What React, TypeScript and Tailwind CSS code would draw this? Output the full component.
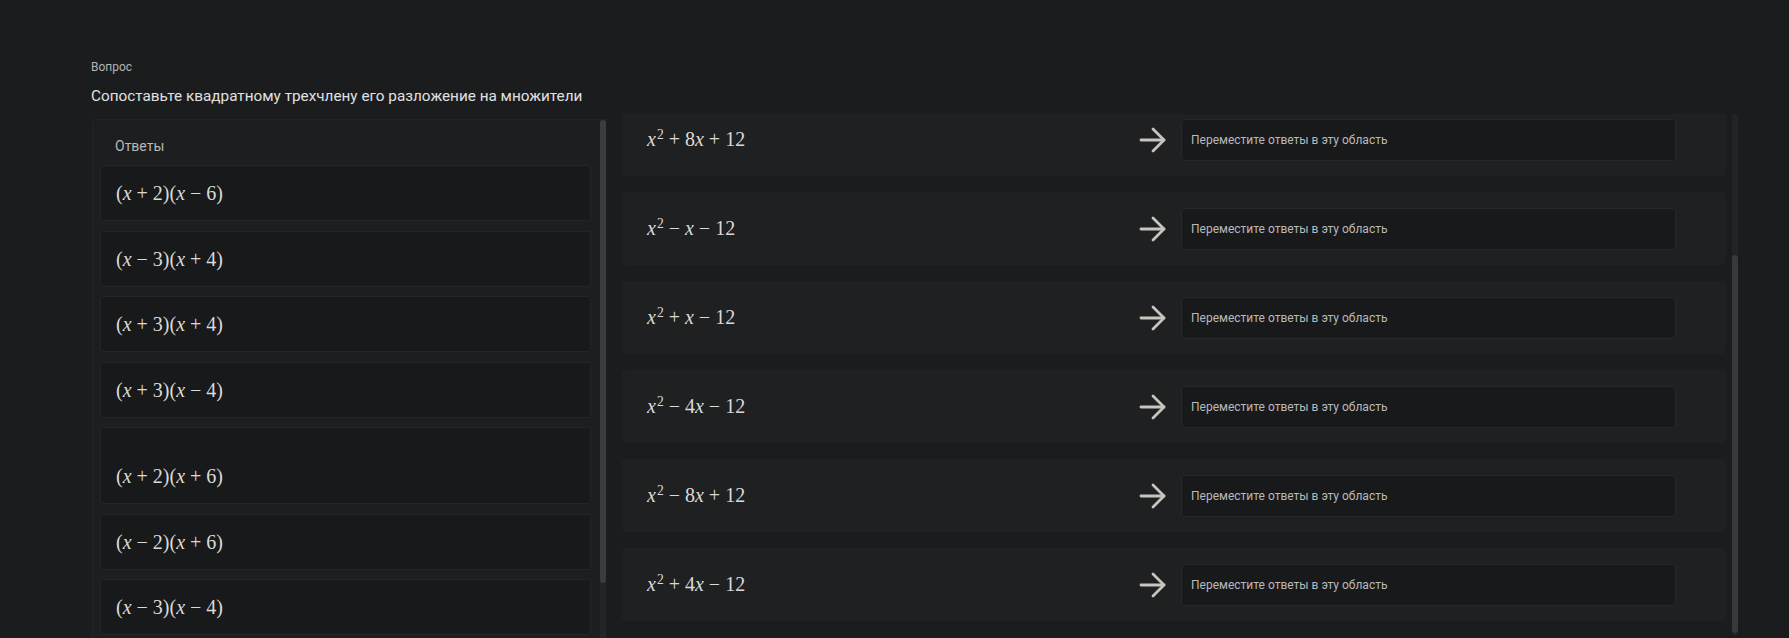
import React from 'react';

const answers = [
  { expr: '(x+2)(x−6)' },
  { expr: '(x−3)(x+4)' },
  { expr: '(x+3)(x+4)' },
  { expr: '(x+3)(x−4)' },
  { expr: '(x+2)(x+6)', tall: true },
  { expr: '(x−2)(x+6)' },
  { expr: '(x−3)(x−4)' },
];

const trinomials = ['x^2+8x+12', 'x^2−x−12', 'x^2+x−12', 'x^2−4x−12', 'x^2−8x+12', 'x^2+4x−12'];

function MathExpr({ expr }: { expr: string }) {
  const parts: React.ReactNode[] = [];
  for (let i = 0; i < expr.length; i++) {
    const c = expr[i];
    if (c === 'x') {
      parts.push(<span key={i} className="italic">x</span>);
    } else if (c === '+' || c === '−') {
      parts.push(<span key={i} className="mx-[5px]">{c}</span>);
    } else if (c === '^') {
      parts.push(<sup key={i} className="text-[0.68em] ml-[1px]">{expr[i + 1]}</sup>);
      i++;
    } else {
      parts.push(<span key={i}>{c}</span>);
    }
  }
  return (
    <span className="font-['Liberation_Serif','DejaVu_Serif',serif] text-[20px] leading-[24px] text-[#dadada] whitespace-nowrap">
      {parts}
    </span>
  );
}

function ArrowIcon() {
  return (
    <svg width="28" height="26" viewBox="0 0 28 26" fill="none" stroke="#c8c4be" strokeWidth="2.8" strokeLinecap="round" strokeLinejoin="round">
      <path d="M2 13h23" />
      <path d="M14 2l11 11-11 11" />
    </svg>
  );
}

export default function App() {
  return (
    <div className="h-[638px] overflow-hidden bg-[#1b1c1e] font-['Roboto',sans-serif]">
      <div className="pl-[91px] pt-[59px]">
        <p className="text-[12px] leading-[16px] text-[#b3b3b3]">Вопрос</p>
        <p className="mt-[11px] text-[15.3px] leading-[20px] text-[#e0e0e0]">
          Сопоставьте квадратному трехчлену его разложение на множители
        </p>

        <div className="mt-[8px] flex items-start">
          {/* Ответы */}
          <div className="ml-[1px] mt-[5px] w-[515px] h-[540px] flex bg-[#1d1e20] border-l border-t border-[#222326] rounded-tl-[3px]">
            <div className="w-[491px] ml-[7px] pt-[16px]">
              <p className="pl-[15px] text-[14px] leading-[20px] text-[#b8b8b8]">Ответы</p>
              <div className="mt-[9px] flex flex-col gap-[9.5px]">
                {answers.map((a) => (
                  <div
                    key={a.expr}
                    className={`flex pl-[15px] border border-[#242528] bg-[#18191b] rounded-[3px] ${
                      a.tall ? 'h-[77px] pt-[36px] items-start' : 'h-[56px] items-center'
                    }`}
                  >
                    <MathExpr expr={a.expr} />
                  </div>
                ))}
              </div>
            </div>
            <div className="ml-[9px] w-[6px] h-full flex flex-col bg-[#242528] rounded-full">
              <div className="h-[463px] bg-[#3b3c3f] rounded-full" />
            </div>
          </div>

          {/* Трехчлены */}
          <div className="ml-[15px] h-[524px] flex">
            <div className="w-[1104px] h-full overflow-hidden">
              <div className="-mt-[11px] flex flex-col gap-[16px]">
                {trinomials.map((t) => (
                  <div key={t} className="h-[73px] flex items-center pl-[25px] pr-[50px] bg-[#1f2022] rounded-[4px]">
                    <div className="flex-1">
                      <MathExpr expr={t} />
                    </div>
                    <div className="mr-[14px] flex items-center">
                      <ArrowIcon />
                    </div>
                    <div className="w-[495px] h-[42px] flex items-center px-[9px] bg-[#18191b] border border-[#27282b] rounded-[4px] text-[12px] text-[#b9b9b9]">
                      Переместите ответы в эту область
                    </div>
                  </div>
                ))}
              </div>
            </div>
            <div className="ml-[6px] w-[6px] h-[522px] flex flex-col bg-[#222326] rounded-full">
              <div className="h-[141px]" />
              <div className="h-[378px] bg-[#38393c] rounded-full" />
            </div>
          </div>
        </div>
      </div>
    </div>
  );
}
